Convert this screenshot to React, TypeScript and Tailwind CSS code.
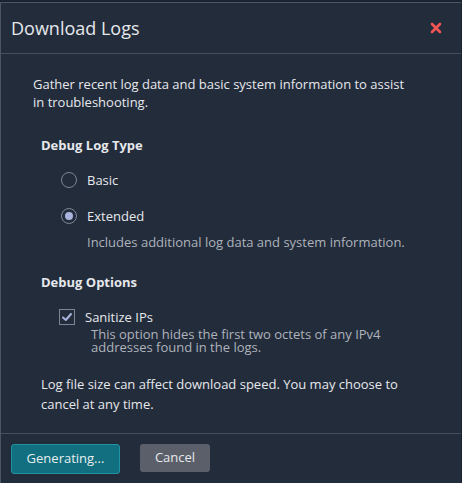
import { useState } from "react";

export default function App() {
  const [logType, setLogType] = useState<"basic" | "extended">("extended");
  const [sanitize, setSanitize] = useState(true);

  return (
    <div
      className="h-[483px] w-[462px] overflow-hidden bg-[#1b2230] pt-[2px]"
      style={{ fontFamily: '"Open Sans", sans-serif' }}
    >
      <div className="flex h-[481px] w-[461px] flex-col border-l border-t border-[#4b5565] bg-[#232c3b] text-[#e6e8ec]">
        <div className="flex h-[51px] items-center justify-between border-b border-[#454f5e] pl-[10px] pr-[19px]">
          <h2 className="text-[18px] leading-none">Download Logs</h2>
          <button type="button" className="text-[#f05555]">
            <svg width="12" height="12" viewBox="0 0 12 12">
              <path d="M2 2 L10 10 M10 2 L2 10" stroke="currentColor" strokeWidth="2.6" strokeLinecap="round" />
            </svg>
          </button>
        </div>

        <div className="flex-1 pl-[32px] pr-[36px] pt-[21px] text-[13px]">
          <p className="pr-[8px] leading-[18px]">
            Gather recent log data and basic system information to assist in troubleshooting.
          </p>

          <div className="pl-[8px]">
            <h3 className="mt-[25px] font-bold leading-[18px]">Debug Log Type</h3>

            <label className="mt-[17px] flex items-center gap-[10px] pl-[20px]" onClick={() => setLogType("basic")}>
              <span className="flex h-[16px] w-[16px] items-center justify-center rounded-full border border-[#7c8696]">
                {logType === "basic" && <span className="h-[8px] w-[8px] rounded-full bg-[#a9b4dc]" />}
              </span>
              <span className="leading-[18px]">Basic</span>
            </label>

            <label className="mt-[18px] flex items-center gap-[10px] pl-[20px]" onClick={() => setLogType("extended")}>
              <span className="flex h-[16px] w-[16px] items-center justify-center rounded-full border border-[#7c8696]">
                {logType === "extended" && <span className="h-[8px] w-[8px] rounded-full bg-[#a9b4dc]" />}
              </span>
              <span className="leading-[18px]">Extended</span>
            </label>
            <p className="mt-[8px] pl-[46px] leading-[18px] text-[#aeb3bc]">
              Includes additional log data and system information.
            </p>

            <h3 className="mt-[22px] font-bold leading-[18px]">Debug Options</h3>

            <label className="mt-[17px] flex items-center gap-[10px] pl-[18px]" onClick={() => setSanitize(!sanitize)}>
              <span className="flex h-[16px] w-[16px] items-center justify-center border border-[#7c8696]">
                {sanitize && (
                  <svg width="12" height="12" viewBox="0 0 12 12">
                    <path d="M2 6.5 L4.8 9 L10 3" fill="none" stroke="#a9b4dc" strokeWidth="2" strokeLinecap="round" strokeLinejoin="round" />
                  </svg>
                )}
              </span>
              <span className="leading-[18px]">Sanitize IPs</span>
            </label>
            <p className="mt-[2px] pl-[50px] pr-[20px] leading-[13px] text-[#aeb3bc]">
              This option hides the first two octets of any IPv4 addresses found in the logs.
            </p>

            <p className="mt-[20px] leading-[20px]">
              Log file size can affect download speed. You may choose to cancel at any time.
            </p>
          </div>
        </div>

        <div className="flex h-[50px] items-start gap-[20px] border-t border-[#454f5e] pl-[10px] pt-[10px] text-[13px]">
          <button
            type="button"
            className="h-[30px] w-[109px] rounded-[3px] border border-[#1e93a3] bg-[#126f7f] text-[#e6eef0]"
          >
            Generating...
          </button>
          <button type="button" className="h-[28px] w-[70px] rounded-[3px] bg-[#5b5f69] text-[#e6e8ec]">
            Cancel
          </button>
        </div>
      </div>
    </div>
  );
}
